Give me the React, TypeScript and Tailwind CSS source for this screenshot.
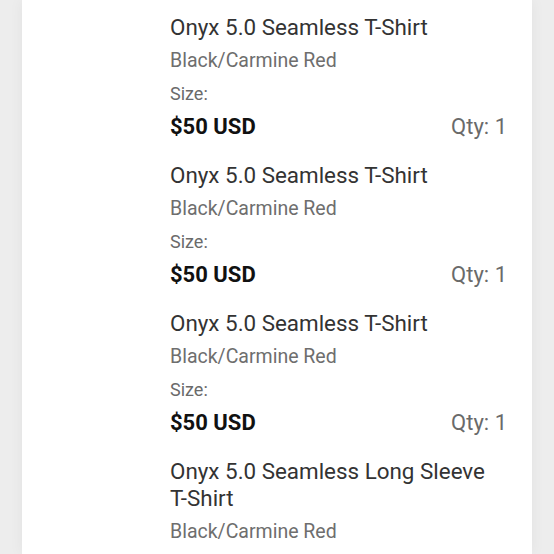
type Item = {
  name: string;
  variant: string;
  size: string;
  price: string;
  qty: number;
};

const items: Item[] = [
  { name: "Onyx 5.0 Seamless T-Shirt", variant: "Black/Carmine Red", size: "", price: "$50 USD", qty: 1 },
  { name: "Onyx 5.0 Seamless T-Shirt", variant: "Black/Carmine Red", size: "", price: "$50 USD", qty: 1 },
  { name: "Onyx 5.0 Seamless T-Shirt", variant: "Black/Carmine Red", size: "", price: "$50 USD", qty: 1 },
  { name: "Onyx 5.0 Seamless Long Sleeve T-Shirt", variant: "Black/Carmine Red", size: "", price: "$50 USD", qty: 1 },
];

function CartLine({ item }: { item: Item }) {
  // keep "T-Shirt" together when the title wraps
  const words = item.name.split(" ");
  return (
    <div className="pb-[21px]">
      <p className="text-[22.4px] leading-[27px] text-[#333]">
        {words.map((w, i) => (
          <span key={i}>
            <span className="whitespace-nowrap">{w}</span>
            {i < words.length - 1 ? " " : ""}
          </span>
        ))}
      </p>
      <p className="mt-[7px] text-[19.5px] leading-[26px] text-[#6e6e6e]">{item.variant}</p>
      <p className="mt-[8px] text-[18px] leading-[24px] text-[#6a6a6a]">Size: {item.size}</p>
      <div className="mt-[7px] flex items-center justify-between leading-[28px]">
        <span className="text-[22px] font-bold text-[#111]">{item.price}</span>
        <span className="text-[22px] text-[#6a6a6a]">Qty: {item.qty}</span>
      </div>
    </div>
  );
}

export default function App() {
  return (
    <div
      className="h-[554px] overflow-hidden bg-[#ededed] px-[22px]"
      style={{ fontFamily: "Roboto, 'Liberation Sans', sans-serif" }}
    >
      <div className="h-full bg-white pl-[148px] pr-[25px] pt-[14px] shadow-[0_0_14px_rgba(0,0,0,0.05)]">
        {items.map((item, i) => (
          <CartLine key={i} item={item} />
        ))}
      </div>
    </div>
  );
}
